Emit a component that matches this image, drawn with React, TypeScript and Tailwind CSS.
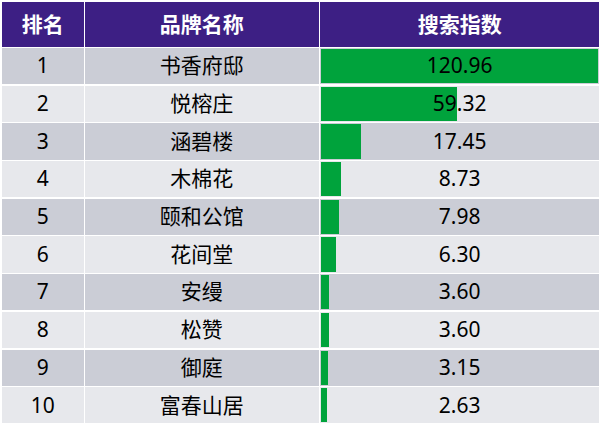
import React from "react";

const rows: [number, string, number][] = [
  [1, "书香府邸", 120.96],
  [2, "悦榕庄", 59.32],
  [3, "涵碧楼", 17.45],
  [4, "木棉花", 8.73],
  [5, "颐和公馆", 7.98],
  [6, "花间堂", 6.3],
  [7, "安缦", 3.6],
  [8, "松赞", 3.6],
  [9, "御庭", 3.15],
  [10, "富春山居", 2.63],
];

const font = { fontFamily: '"Noto Sans", "Noto Sans CJK SC", sans-serif' };

export default function App() {
  const max = 120.96;
  return (
    <div className="w-[602px] h-[427px] bg-white pt-[2px] pl-[2px]" style={font}>
      <div className="grid grid-cols-[81.5px_233.7px_279px] gap-[1.5px]">
        <div className="h-[44.5px] bg-[#3d1f84] text-white font-bold text-[21px] flex items-center justify-center">排名</div>
        <div className="h-[44.5px] bg-[#3d1f84] text-white font-bold text-[21px] flex items-center justify-center">品牌名称</div>
        <div className="h-[44.5px] bg-[#3d1f84] text-white font-bold text-[21px] flex items-center justify-center">搜索指数</div>
        {rows.map(([rank, name, v], i) => {
          const bg = i % 2 === 0 ? "bg-[#cbcdd6]" : "bg-[#e7e8ec]";
          return (
            <React.Fragment key={rank}>
              <div className={`h-[36.2px] ${bg} text-[21px] text-black flex items-center justify-center`}>{rank}</div>
              <div className={`h-[36.2px] ${bg} text-[21px] text-black flex items-center justify-center`}>{name}</div>
              <div className={`h-[36.2px] ${bg} relative p-[1px]`}>
                <div className="h-full bg-[#00a33c]" style={{ width: `${(v / max) * 277}px` }} />
                <div className="absolute inset-0 flex items-center justify-center text-[21px] text-black">{v.toFixed(2)}</div>
              </div>
            </React.Fragment>
          );
        })}
      </div>
    </div>
  );
}
